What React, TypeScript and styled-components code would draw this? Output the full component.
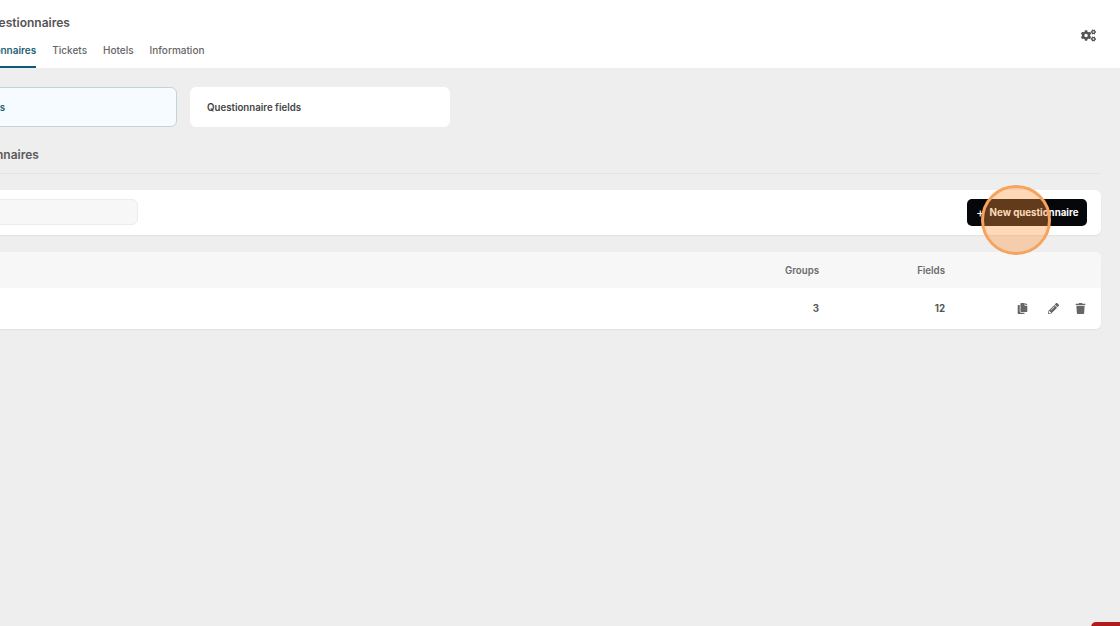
import styled, { createGlobalStyle } from 'styled-components';
import { FaCogs, FaCopy, FaPencilAlt, FaTrash } from 'react-icons/fa';

const GlobalStyle = createGlobalStyle`
  html, body {
    margin: 0;
    padding: 0;
    overflow: hidden;
    background: #eeeeee;
    font-family: Inter, "Liberation Sans", sans-serif;
    color: #4a4a4a;
  }
`;

const Viewport = styled.div`
  position: relative;
  width: 1120px;
  height: 626px;
  overflow: hidden;
`;

const Page = styled.div`
  margin-left: -83px;
  width: 1203px;
`;

const Header = styled.header`
  height: 68px;
  box-sizing: border-box;
  background: #fff;
  display: flex;
  justify-content: space-between;
  align-items: center;
  padding: 0 24px 0 46px;
`;

const HeaderLeft = styled.div`
  align-self: stretch;
  display: flex;
  flex-direction: column;
  justify-content: space-between;
`;

const Title = styled.h1`
  margin: 15px 0 0 19px;
  font-size: 12px;
  line-height: 15px;
  font-weight: 600;
  color: #555555;
`;

const Tabs = styled.nav`
  display: flex;
  gap: 16px;
`;

const Tab = styled.a<{ $active?: boolean }>`
  height: 37px;
  box-sizing: border-box;
  padding-top: 10px;
  font-size: 10px;
  line-height: 18px;
  color: ${(p) => (p.$active ? '#1f5f78' : '#666666')};
  font-weight: ${(p) => (p.$active ? 600 : 500)};
  border-bottom: 2px solid ${(p) => (p.$active ? '#0f5a75' : 'transparent')};
`;

const SettingsButton = styled.button`
  border: 0;
  padding: 2px 0 0;
  background: none;
  display: flex;
  color: #555555;
`;

const Main = styled.main`
  padding: 19px 19px 0 0;
`;

const Cards = styled.div`
  display: flex;
  gap: 13px;
`;

const Card = styled.div<{ $active?: boolean }>`
  width: 260px;
  height: 40px;
  box-sizing: border-box;
  padding-left: 16px;
  display: flex;
  align-items: center;
  border-radius: 6px;
  font-size: 9.7px;
  font-weight: 600;
  background: ${(p) => (p.$active ? '#f5fbfe' : '#fff')};
  color: ${(p) => (p.$active ? '#1f5f78' : '#454545')};
  border: 1px solid ${(p) => (p.$active ? '#c3d3da' : '#fff')};
`;

const SectionTitle = styled.h2`
  margin: 0;
  padding: 20px 0 10px;
  border-bottom: 1px solid #e4e4e4;
  font-size: 12px;
  line-height: 16px;
  font-weight: 600;
  color: #5a5a5a;
`;

const Toolbar = styled.div`
  margin-top: 16px;
  height: 45px;
  box-sizing: border-box;
  background: #fff;
  border-radius: 6px;
  box-shadow: 0 1px 2px rgba(0, 0, 0, 0.06);
  display: flex;
  justify-content: space-between;
  align-items: flex-start;
  padding: 9px 14px 0 0;
`;

const SearchInput = styled.input`
  width: 221px;
  height: 26px;
  box-sizing: border-box;
  border: 1px solid #ececec;
  border-radius: 6px;
  background: #f7f7f7;
`;

const PrimaryButton = styled.button`
  width: 120px;
  height: 27px;
  box-sizing: border-box;
  border: 0;
  border-radius: 5px;
  background: #05070a;
  color: #fff;
  display: flex;
  align-items: center;
  padding: 0 0 0 9px;
  gap: 5px;
  font-family: inherit;
  font-size: 9.7px;
  font-weight: 700;
  white-space: nowrap;
`;

const Plus = styled.span`
  font-size: 13px;
  font-weight: 400;
  line-height: 1;
`;

const Table = styled.div`
  margin-top: 17px;
  background: #fff;
  border-radius: 6px;
  overflow: hidden;
  box-shadow: 0 1px 2px rgba(0, 0, 0, 0.06);
`;

const Row = styled.div<{ $head?: boolean }>`
  display: grid;
  grid-template-columns: 902px 126px 1fr;
  align-items: center;
  height: ${(p) => (p.$head ? 36 : 41)}px;
  background: ${(p) => (p.$head ? '#f7f7f7' : '#fff')};
  font-size: 9.7px;
  font-weight: ${(p) => (p.$head ? 600 : 700)};
  color: ${(p) => (p.$head ? '#6b6b6b' : '#555555')};
`;

const NumberCell = styled.div`
  text-align: right;
`;

const Actions = styled.div`
  display: grid;
  grid-template-columns: 32px 30px 24px;
  justify-items: center;
  align-items: center;
  color: #666666;
  padding-left: 61px;
`;

const Highlight = styled.div`
  position: absolute;
  left: 981px;
  top: 185px;
  width: 70px;
  height: 70px;
  box-sizing: border-box;
  border-radius: 50%;
  border: 3px solid #f4a45f;
  background: rgba(255, 150, 60, 0.37);
`;

const RedBadge = styled.div`
  position: absolute;
  right: 0;
  bottom: -10px;
  width: 29px;
  height: 14px;
  border-radius: 5px 0 0 0;
  background: #b01c1c;
`;

export default function App() {
  return (
    <Viewport>
      <GlobalStyle />
      <Page>
        <Header>
          <HeaderLeft>
            <Title>Questionnaires</Title>
            <Tabs>
              <Tab $active>Questionnaires</Tab>
              <Tab>Tickets</Tab>
              <Tab>Hotels</Tab>
              <Tab>Information</Tab>
            </Tabs>
          </HeaderLeft>
          <SettingsButton>
            <FaCogs size={15} />
          </SettingsButton>
        </Header>
        <Main>
          <Cards>
            <Card $active>Questionnaires</Card>
            <Card>Questionnaire fields</Card>
          </Cards>
          <SectionTitle>Event questionnaires</SectionTitle>
          <Toolbar>
            <SearchInput />
            <PrimaryButton>
              <Plus>+</Plus>
              New questionnaire
            </PrimaryButton>
          </Toolbar>
          <Table>
            <Row $head>
              <NumberCell>Groups</NumberCell>
              <NumberCell>Fields</NumberCell>
            </Row>
            <Row>
              <NumberCell>3</NumberCell>
              <NumberCell>12</NumberCell>
              <Actions>
                <FaCopy size={11} />
                <FaPencilAlt size={11} />
                <FaTrash size={11} />
              </Actions>
            </Row>
          </Table>
        </Main>
      </Page>
      <Highlight />
      <RedBadge />
    </Viewport>
  );
}
